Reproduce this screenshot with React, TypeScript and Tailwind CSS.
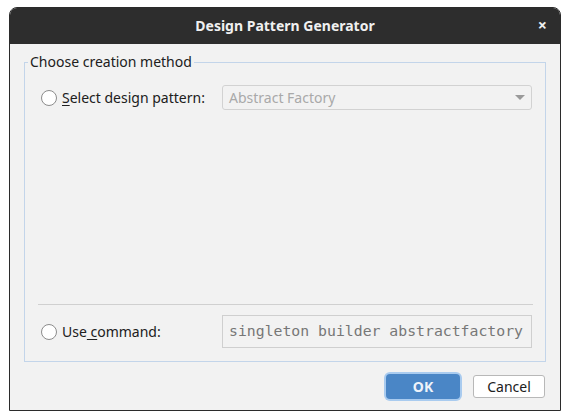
import React from "react";

function Radio() {
  return (
    <span className="inline-block w-[16px] h-[16px] rounded-full border border-[#8c8c8c] bg-white shrink-0" />
  );
}

export default function App() {
  return (
    <div className="w-[570px] h-[420px] bg-white pt-[7px] pl-[9px]" style={{ fontFamily: '"Noto Sans", sans-serif' }}>
      <div className="w-[552px] h-[404px] flex flex-col rounded-t-[8px] border border-[#2b2b2b] bg-[#f2f2f2] overflow-hidden">
        {/* Title bar */}
        <div className="h-[36px] shrink-0 bg-[#2d2d2d] flex items-center relative">
          <div className="flex-1 text-center text-[14px] font-bold text-[#f0f0f0] leading-none">Design Pattern Generator</div>
          <div className="absolute right-[13px] top-[9px] text-[#f0f0f0] text-[16px] font-bold leading-[16px]">×</div>
        </div>
        {/* Body */}
        <div className="flex-1 flex flex-col px-[14px] pt-[18px]">
          <div className="h-[300px] border border-[#c3d5ea] flex flex-col">
            <div className="-mt-[11px] ml-[3px] px-[2px] self-start bg-[#f2f2f2] text-[14px] leading-[20px] text-[#202020]">
              Choose creation method
            </div>
            <div className="flex-1 flex flex-col pl-[16px] pr-[13px] pb-[13px]">
              <div className="mt-[13px] flex items-center h-[25px]">
                <Radio />
                <span className="ml-[5px] w-[160px] text-[14px] text-[#202020]">
                  <span className="underline underline-offset-2">S</span>elect design pattern:
                </span>
                <div className="flex-1 h-[25px] border border-[#d2d2d2] rounded-[3px] flex items-center pl-[6px] pr-[6px]">
                  <span className="flex-1 text-[14px] text-[#a9a9a9]">Abstract Factory</span>
                  <svg width="10" height="6" viewBox="0 0 10 6"><path d="M0 0 L10 0 L5 5 Z" fill="#9a9a9a" /></svg>
                </div>
              </div>
              <div className="flex-1" />
              <div className="h-px bg-[#d0d0d0] -ml-[3px] -mr-[1px]" />
              <div className="mt-[10px] flex items-center h-[33px]">
                <Radio />
                <span className="ml-[5px] w-[160px] text-[14px] text-[#202020]">
                  Use<span className="underline underline-offset-2"> c</span>ommand:
                </span>
                <div className="flex-1 h-[33px] border border-[#cfcfcf] flex items-center pl-[6px]">
                  <span className="text-[14.8px] text-[#777777]" style={{ fontFamily: '"DejaVu Sans Mono", monospace' }}>
                    singleton builder abstractfactory
                  </span>
                </div>
              </div>
            </div>
          </div>
          <div className="flex justify-end mt-[12px] pr-[1px]">
            <div className="w-[74px] h-[25px] rounded-[4px] bg-[#4a86c6] ring-2 ring-[#a9cbef] flex items-center justify-center text-[14px] text-[#eef3fa] font-bold">
              OK
            </div>
            <div className="ml-[13px] w-[72px] h-[23px] mt-[1px] rounded-[3px] bg-white border border-[#b8b8b8] flex items-center justify-center text-[14px] text-[#202020]">
              Cancel
            </div>
          </div>
        </div>
      </div>
    </div>
  );
}
